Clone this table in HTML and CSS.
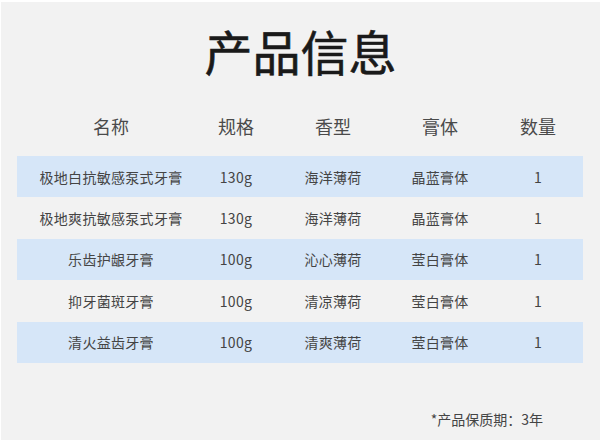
FILE: index.html
```html
<!DOCTYPE html>
<html lang="zh-CN">
<head>
<meta charset="utf-8">
<title>产品信息</title>
<link rel="stylesheet" href="styles.css">
</head>
<body>
<div class="page">
  <h1 class="title">产品信息</h1>
  <div class="table">
    <div class="row head">
      <div class="c1">名称</div><div class="c2">规格</div><div class="c3">香型</div><div class="c4">膏体</div><div class="c5">数量</div>
    </div>
    <div class="row band">
      <div class="c1">极地白抗敏感泵式牙膏</div><div class="c2">130g</div><div class="c3">海洋薄荷</div><div class="c4">晶蓝膏体</div><div class="c5">1</div>
    </div>
    <div class="row">
      <div class="c1">极地爽抗敏感泵式牙膏</div><div class="c2">130g</div><div class="c3">海洋薄荷</div><div class="c4">晶蓝膏体</div><div class="c5">1</div>
    </div>
    <div class="row band">
      <div class="c1">乐齿护龈牙膏</div><div class="c2">100g</div><div class="c3">沁心薄荷</div><div class="c4">莹白膏体</div><div class="c5">1</div>
    </div>
    <div class="row">
      <div class="c1">抑牙菌斑牙膏</div><div class="c2">100g</div><div class="c3">清凉薄荷</div><div class="c4">莹白膏体</div><div class="c5">1</div>
    </div>
    <div class="row band">
      <div class="c1">清火益齿牙膏</div><div class="c2">100g</div><div class="c3">清爽薄荷</div><div class="c4">莹白膏体</div><div class="c5">1</div>
    </div>
  </div>
  <p class="note">*产品保质期：3年</p>
</div>
</body>
</html>
```
FILE: styles.css
```css
html, body {
  margin: 0;
  padding: 0;
  background: #f2f2f2;
}
.page {
  box-sizing: border-box;
  width: 600px;
  height: 440px;
  background: #f2f2f2;
  border-top: 2px solid #ffffff;
  border-left: 1px solid #ffffff;
  padding-top: 24px;
  font-family: "Noto Sans CJK SC", "Noto Sans", sans-serif;
  color: #444444;
  overflow: hidden;
}
.title {
  margin: 0;
  text-align: center;
  font-size: 48px;
  line-height: 48px;
  font-weight: 400;
  -webkit-text-stroke: 0.6px #1a1a1a;
  color: #1a1a1a;
  letter-spacing: 0;
}
.table {
  margin: 39px 0 0 16px;
  width: 566px;
}
.row {
  display: grid;
  grid-template-columns: 188px 62px 132px 82px 102px;
  align-items: center;
  height: 41.4px;
  font-size: 14px;
  letter-spacing: 0.3px;
  color: #444444;
}
.row > div {
  text-align: center;
  white-space: nowrap;
}
.row .c5 {
  padding-left: 12px;
}
.head {
  height: 24px;
  margin-bottom: 19px;
  font-size: 18px;
  letter-spacing: 0;
  color: #4a4a4a;
}
.band {
  background: #d6e6f8;
}
.note {
  margin: 46px 57px 0 0;
  text-align: right;
  font-size: 14px;
  line-height: 20px;
  color: #444444;
}
```
